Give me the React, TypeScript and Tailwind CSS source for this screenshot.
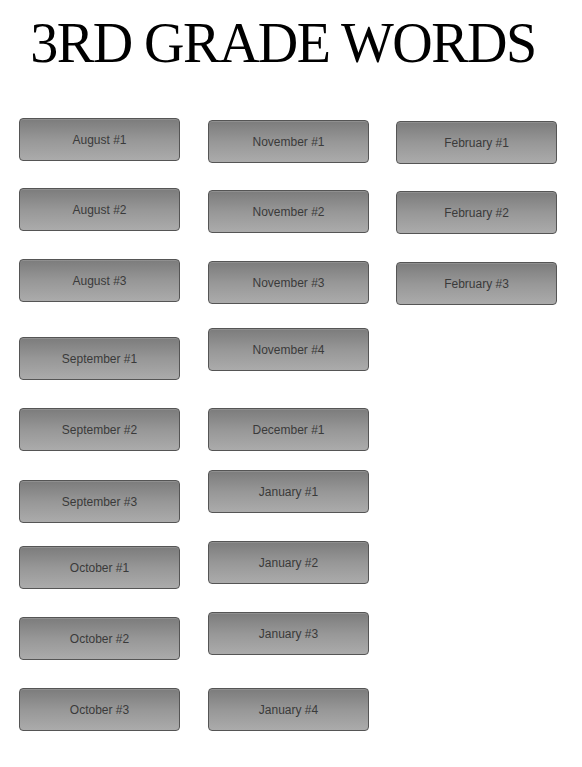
const columns: { label: string; top: number }[][] = [
  [
    { label: "August #1", top: 118 },
    { label: "August #2", top: 188 },
    { label: "August #3", top: 259 },
    { label: "September #1", top: 337 },
    { label: "September #2", top: 408 },
    { label: "September #3", top: 480 },
    { label: "October #1", top: 546 },
    { label: "October #2", top: 617 },
    { label: "October #3", top: 688 },
  ],
  [
    { label: "November #1", top: 120 },
    { label: "November #2", top: 190 },
    { label: "November #3", top: 261 },
    { label: "November #4", top: 328 },
    { label: "December #1", top: 408 },
    { label: "January #1", top: 470 },
    { label: "January #2", top: 541 },
    { label: "January #3", top: 612 },
    { label: "January #4", top: 688 },
  ],
  [
    { label: "February #1", top: 121 },
    { label: "February #2", top: 191 },
    { label: "February #3", top: 262 },
  ],
];

const BUTTON_H = 43;
const HEADER_H = 100;

function WordButton({ label, gap }: { label: string; gap: number }) {
  return (
    <a
      href="#"
      style={{ marginTop: gap }}
      className="flex h-[43px] w-[161px] items-center justify-center rounded-[4px] border border-[#555] bg-gradient-to-b from-[#7c7c7c] via-[#979797] to-[#ababab] text-[12px] text-[#3a3a3a] shadow-[inset_0_1px_0_rgba(255,255,255,0.15)]"
    >
      {label}
    </a>
  );
}

export default function App() {
  return (
    <div className="h-[767px] w-[582px] bg-white font-['Liberation_Sans',Arial,sans-serif]">
      <header className="flex h-[100px] justify-center pr-[16px] pt-[8px]">
        <h1 className="font-['Liberation_Serif','Times_New_Roman',serif] text-[56px] leading-[70px] tracking-[-1.5px] text-black">
          3RD GRADE WORDS
        </h1>
      </header>
      <div className="flex pl-[19px]">
        {columns.map((col, i) => (
          <div key={i} className={`flex flex-col ${i === 0 ? "" : i === 1 ? "ml-[28px]" : "ml-[27px]"}`}>
            {col.map((b, j) => {
              const prevBottom = j === 0 ? HEADER_H : col[j - 1].top + BUTTON_H;
              return <WordButton key={b.label} label={b.label} gap={b.top - prevBottom} />;
            })}
          </div>
        ))}
      </div>
    </div>
  );
}
